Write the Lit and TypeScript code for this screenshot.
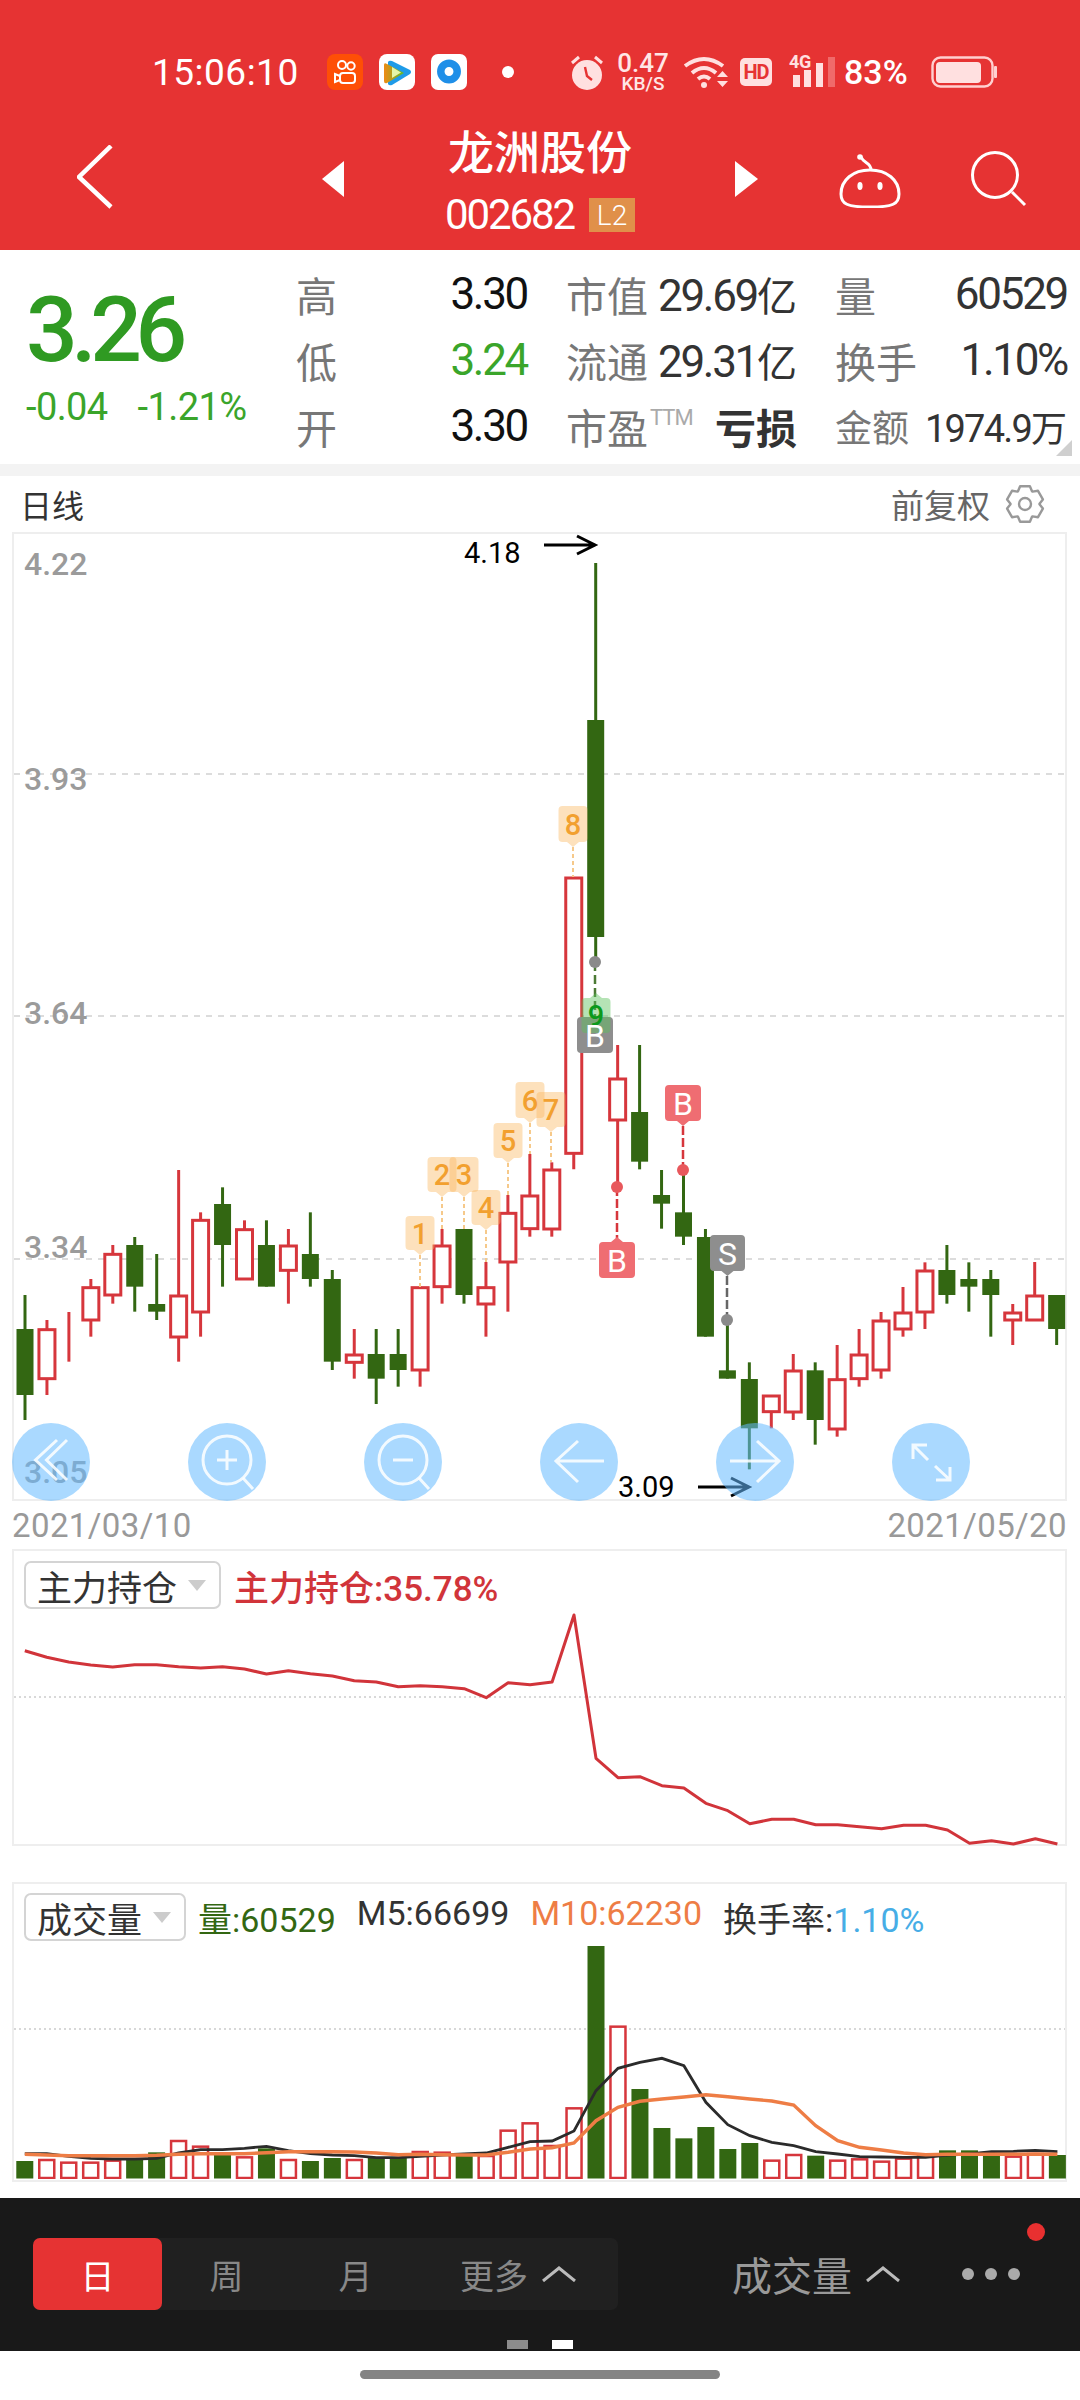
import { LitElement, html, css, svg } from "lit";
import { customElement } from "lit/decorators.js";

type C = [number, number, number, number, number, number];
const CANDLES: C[] = [
  [0, 585, 687, 885, 960, 0],[1, 660, 686, 836, 885, 0],[1, 636, 687, 687, 785, 0],[1, 537, 560, 660, 710, 0],
  [1, 435, 460, 585, 611, 0],[0, 411, 435, 560, 635, 0],[0, 462, 612, 635, 660, 0],[1, 210, 585, 711, 785, 0],
  [1, 337, 358, 636, 710, 0],[0, 262, 312, 435, 560, 0],[1, 361, 386, 537, 537, 0],[0, 361, 435, 560, 560, 0],
  [1, 387, 435, 511, 611, 0],[0, 337, 462, 537, 560, 0],[0, 510, 537, 785, 810, 0],[1, 687, 762, 787, 836, 0],
  [0, 687, 762, 836, 912, 0],[0, 687, 762, 810, 860, 0],[1, 560, 560, 810, 860, 0],[1, 387, 435, 560, 611, 0],
  [0, 387, 387, 585, 611, 0],[1, 486, 560, 612, 710, 0],[1, 285, 337, 486, 635, 0],[1, 162, 285, 386, 410, 0],
  [1, 187, 207, 387, 410, 0],[1, -669, -669, 160, 208, 0],[0, -1611, -1140, -489, -414, 0],[1, -165, -66, 60, 261, 0],
  [0, -165, 36, 185, 208, 0],[0, 210, 285, 311, 386, 0],[0, 210, 337, 410, 435, 0],[0, 387, 411, 710, 710, 0],
  [0, 660, 811, 836, 836, 0],[0, 787, 837, 985, 1108, 0],[1, 885, 885, 935, 985, 0],[1, 762, 810, 936, 960, 0],
  [0, 787, 811, 960, 1034, 0],[1, 735, 836, 987, 1010, 0],[1, 687, 762, 836, 860, 0],[1, 636, 660, 810, 836, 0],
  [1, 561, 636, 687, 710, 0],[1, 487, 510, 636, 687, 0],[0, 435, 510, 585, 611, 0],[0, 487, 537, 560, 635, 0],
  [0, 510, 537, 585, 710, 0],[1, 612, 636, 660, 735, 0],[1, 486, 585, 660, 660, 0],[0, 585, 585, 687, 735, 0],
];
const HOLD = [332,352,366,375,381,374,374,380,384,380,387,402,392,401,408,422,426,440,437,440,446,473,428,434,426,225,655,713,710,737,744,790,812,851,838,838,854,854,860,866,856,856,870,910,902,912,896,912];
const VOL: [number, number][] = [[0,906],[1,900],[1,908],[1,908],[1,902],[0,902],[0,880],[1,843],[1,860],[0,888],[1,892],[0,868],[1,900],[0,906],[0,897],[1,900],[0,897],[0,897],[1,876],[1,878],[0,890],[1,888],[1,812],[1,790],[1,858],[1,745],[0,261],[1,500],[0,690],[0,807],[0,838],[0,804],[0,870],[0,852],[1,902],[1,885],[0,890],[1,902],[1,898],[1,905],[1,896],[1,888],[0,874],[0,874],[0,884],[1,890],[1,882],[0,888]];
const M5 = [884,884,892,898,900,900,898,882,872,872,868,862,875,884,888,890,896,896,892,888,885,882,865,848,846,816,695,628,610,598,620,730,797,830,850,860,878,885,893,894,895,895,888,885,878,877,874,878];
const M10 = [886,888,890,890,890,890,889,886,884,884,884,881,878,878,878,879,882,887,886,887,888,888,880,870,866,852,785,745,727,720,714,707,713,720,726,738,800,845,865,873,882,887,886,886,886,886,885,886];

const X = (i: number) => 25 + 21.95 * i;
const Y = (z: number) => 1100 + z / 3;
const RED = "#d6363c";
const GREEN = "#336712";

function gearPath(cx: number, cy: number) {
  const pts: string[] = [];
  for (let k = 0; k < 6; k++) {
    const a = (k * Math.PI) / 3 - Math.PI / 2;
    const d = 0.27, e = 0.5;
    const p = (r: number, t: number) => `${(cx + r * Math.cos(t)).toFixed(1)} ${(cy + r * Math.sin(t)).toFixed(1)}`;
    pts.push(p(14.5, a - e), p(18.5, a - d), p(18.5, a + d), p(14.5, a + e));
  }
  return "M" + pts.join("L") + "Z";
}

function tag(cx: number, top: number, bottom: number, tipY: number, w: number, fill: string, op = 1) {
  const l = cx - w / 2, r = cx + w / 2;
  const up = tipY < top;
  const shape = up
    ? `M${l + 4} ${top}H${cx - 6}L${cx} ${tipY}L${cx + 6} ${top}H${r - 4}Q${r} ${top} ${r} ${top + 4}V${bottom - 4}Q${r} ${bottom} ${r - 4} ${bottom}H${l + 4}Q${l} ${bottom} ${l} ${bottom - 4}V${top + 4}Q${l} ${top} ${l + 4} ${top}Z`
    : `M${l + 4} ${top}H${r - 4}Q${r} ${top} ${r} ${top + 4}V${bottom - 4}Q${r} ${bottom} ${r - 4} ${bottom}H${cx + 6}L${cx} ${tipY}L${cx - 6} ${bottom}H${l + 4}Q${l} ${bottom} ${l} ${bottom - 4}V${top + 4}Q${l} ${top} ${l + 4} ${top}Z`;
  return svg`<path d=${shape} fill=${fill} opacity=${op}></path>`;
}

const ORANGE_TAGS: [number, number, number, number, number, string][] = [
  [420, 1216, 1250, 1255, 1287, "1"],
  [442, 1157, 1192, 1197, 1229, "2"],
  [464, 1157, 1192, 1197, 1229, "3"],
  [486, 1190, 1225, 1230, 1262, "4"],
  [508, 1123, 1158, 1163, 1195, "5"],
  [530, 1082, 1118, 1123, 1154, "6"],
  [551, 1092, 1127, 1132, 1162, "7"],
  [573, 806, 842, 847, 877, "8"],
];

function mainChart() {
  return svg`<svg class="plot" viewBox="12 532 1055 969" width="1055" height="969">
    ${[774, 1016, 1259].map((y) => svg`<line x1="14" x2="1065" y1=${y} y2=${y} stroke="#dcdcdc" stroke-width="2" stroke-dasharray="6 6"></line>`)}
    <text class="axis" x="24" y="575">4.22</text>
    <text class="axis" x="24" y="790">3.93</text>
    <text class="axis" x="24" y="1024">3.64</text>
    <text class="axis" x="24" y="1258">3.34</text>
    <text class="axis" x="24" y="1483">3.05</text>
    ${CANDLES.map((c, i) => {
      const x = X(i);
      const col = c[0] ? RED : GREEN;
      return svg`<line x1=${x} x2=${x} y1=${Y(c[1])} y2=${Y(c[4])} stroke=${col} stroke-width="3"></line>
      ${c[0]
        ? svg`<rect x=${x - 8} y=${Y(c[2]) + 1} width="16" height=${Math.max(Y(c[3]) - Y(c[2]) - 1, 0)} fill="#fff" stroke=${col} stroke-width="3"></rect>`
        : svg`<rect x=${x - 8.5} y=${Y(c[2])} width="17" height=${Y(c[3]) - Y(c[2])} fill=${col}></rect>`}`;
    })}
    ${ORANGE_TAGS.map((t) => svg`<line x1=${t[0]} x2=${t[0]} y1=${t[3]} y2=${t[4]} stroke="#f6c98a" stroke-width="2" stroke-dasharray="4 3"></line>`)}
    ${ORANGE_TAGS.map((t) => tag(t[0], t[1], t[2], t[3], 29, "#fbb860", 0.42))}
    ${ORANGE_TAGS.map((t) => svg`<text class="tag-t" x=${t[0]} y=${(t[1] + t[2]) / 2 + 10.5} fill="#f2a02f" text-anchor="middle">${t[5]}</text>`)}

    <line x1="595" x2="595" y1="962" y2="1017" stroke="#4b7a34" stroke-width="2.5" stroke-dasharray="9 4"></line>
    <circle cx="595" cy="962" r="6" fill="#8a8a8a"></circle>
    <rect x="577" y="1017" width="36" height="36" rx="4" fill="#8e8e8e"></rect>
    ${tag(596, 998, 1033, 993, 29, "#5cc05c", 0.45)}
    <text class="tag-t" x="596" y="1026" fill="#0b9a1c" text-anchor="middle">9</text>
    <text class="tag-b" x="595" y="1047" fill="#fff" text-anchor="middle">B</text>

    <line x1="617" x2="617" y1="1187" y2="1238" stroke=${RED} stroke-width="2.5" stroke-dasharray="9 3"></line>
    <circle cx="617" cy="1187" r="6" fill="#e8585c"></circle>
    ${tag(617, 1242, 1278, 1237, 36, "#ef6d72")}
    <text class="tag-b" x="617" y="1272" fill="#fff" text-anchor="middle">B</text>

    <line x1="683" x2="683" y1="1126" y2="1170" stroke=${RED} stroke-width="2.5" stroke-dasharray="9 3"></line>
    <circle cx="683" cy="1170" r="6" fill="#e8585c"></circle>
    ${tag(683, 1085, 1121, 1126, 36, "#ef6d72")}
    <text class="tag-b" x="683" y="1115" fill="#fff" text-anchor="middle">B</text>

    <line x1="727" x2="727" y1="1276" y2="1320" stroke="#666" stroke-width="2.5" stroke-dasharray="9 3"></line>
    <circle cx="727" cy="1320" r="6" fill="#8a8a8a"></circle>
    ${tag(727.5, 1235, 1271, 1276, 35, "#8e8e8e")}
    <text class="tag-b" x="727.5" y="1265" fill="#fff" text-anchor="middle">S</text>

    <text class="note" x="464" y="563">4.18</text>
    <path d="M544 545H594M577 536L595 545L577 554" fill="none" stroke="#000" stroke-width="3"></path>
    <text class="note" x="618" y="1497">3.09</text>
    <path d="M698 1487H748M731 1478L749 1487L731 1496" fill="none" stroke="#000" stroke-width="3"></path>
  </svg>`;
}

const px = (i: number) => (36 + 31.9 * i) / 1.452;

function holdChart() {
  const pts = HOLD.map((z, i) => `${px(i).toFixed(1)},${(1540 + z / 3).toFixed(1)}`).join(" ");
  return svg`<svg class="plot-flow" viewBox="12 1609 1055 237" width="1055" height="237">
    <line x1="14" x2="1065" y1="1697" y2="1697" stroke="#d8d8d8" stroke-width="2" stroke-dasharray="2 3"></line>
    <polyline points=${pts} fill="none" stroke="#d1343a" stroke-width="3" stroke-linejoin="round"></polyline>
  </svg>`;
}

function volChart() {
  const py = (z: number) => 1860 + z / 3;
  const line = (a: number[]) => a.map((z, i) => `${px(i).toFixed(1)},${py(z).toFixed(1)}`).join(" ");
  return svg`<svg class="plot-flow" viewBox="12 1942 1055 238" width="1055" height="238">
    <line x1="14" x2="1065" y1="2030" y2="2030" stroke="#d8d8d8" stroke-width="2" stroke-dasharray="2 3"></line>
    ${VOL.map(([t, z], i) => {
      const x = px(i);
      return t
        ? svg`<rect x=${x - 7.5} y=${py(z) + 1} width="15" height=${2178 - py(z)} fill="#fff" stroke=${RED} stroke-width="2.5"></rect>`
        : svg`<rect x=${x - 8.5} y=${py(z)} width="17" height=${2179.5 - py(z)} fill=${GREEN}></rect>`;
    })}
    <polyline points=${line(M5)} fill="none" stroke="#2b2b2b" stroke-width="2.8"></polyline>
    <polyline points=${line(M10)} fill="none" stroke="#ee7d45" stroke-width="3.4"></polyline>
  </svg>`;
}

const ROUND_ICONS = [
  svg`<path d="M45 17L23.5 37L45 57M55 17L34.5 37L55 57"></path>`,
  svg`<circle cx="39" cy="37" r="24"></circle><path d="M55 55L65 66M29 37H49M39 27V47"></path>`,
  svg`<circle cx="39" cy="37" r="24"></circle><path d="M55 55L65 66M29 37H49"></path>`,
  svg`<path d="M64 38H17M38 18L16 38L38 59"></path>`,
  svg`<path d="M14 38H62M41 18L63 38L41 59"></path>`,
  svg`<path d="M21 22L36 37M21 36V22H35M43 43L58 57M58 44V57H44"></path>`,
];

@customElement("app-root")
export class AppRoot extends LitElement {
  static styles = css`
    :host { display: block; width: 1080px; height: 2400px; background: #fff; overflow: hidden;
      font-family: Roboto, "Noto Sans CJK SC", sans-serif; color: #333; }
    .header { height: 250px; background: #e63333; color: #fff; box-sizing: border-box; padding-top: 52px; }
    .status { display: flex; align-items: center; height: 40px; padding-left: 152px; }
    .time { width: 146px; font-size: 37px; letter-spacing: .5px; white-space: nowrap; }
    .app { width: 36px; height: 36px; display: block; margin-left: 16px; }
    .app.first { margin-left: 29px; }
    .sdot { width: 12px; height: 12px; border-radius: 50%; background: #fff; margin-left: 35px; }
    .alarm { margin-left: 56px; display: block; }
    .net { margin-left: 13px; width: 52px; display: flex; flex-direction: column; align-items: center; color: #ffe6e6; white-space: nowrap; }
    .net b { font-size: 26px; line-height: 20px; font-weight: 500; }
    .net i { font-style: normal; font-size: 19px; line-height: 16px; font-weight: 500; margin-top: 3px; }
    .wifi { margin-left: 14px; display: block; }
    .hd { margin-left: 11px; width: 32px; height: 28px; border-radius: 5px; background: #ffe0e0; color: #e63333;
      font-size: 20px; font-weight: 700; display: flex; align-items: center; justify-content: center; letter-spacing: -1px; }
    .signal { margin-left: 17px; position: relative; width: 46px; height: 32px; }
    .signal span { position: absolute; left: 0; top: -2px; font-size: 18px; line-height: 16px; font-weight: 700; color: #ffe0e0; letter-spacing: -.3px; }
    .signal svg { display: block; }
    .pct { margin-left: 9px; width: 64px; font-size: 34px; font-weight: 500; white-space: nowrap; color: #fff; }
    .batt { margin-left: 23px; display: block; }

    .nav { display: flex; align-items: flex-start; margin-top: 36px; padding-left: 77px; }
    .nav svg { display: block; flex: none; }
    .back { margin-top: 17px; }
    .prev { margin: 33px 0 0 209px; }
    .next { margin: 33px 0 0 45px; }
    .robot { margin: 24px 0 0 80px; }
    .search { margin: 23px 0 0 68px; }
    .titlebox { margin-left: 46px; width: 300px; display: flex; flex-direction: column; align-items: center; }
    .name { font-size: 46px; line-height: 50px; font-weight: 500; white-space: nowrap; }
    .coderow { display: flex; align-items: center; gap: 15px; margin-top: 20px; height: 34px; }
    .code { font-size: 42px; line-height: 34px; letter-spacing: -2.1px; }
    .l2 { width: 46px; height: 34px; background: #e0904a; font-size: 28px; font-weight: 300; display: flex; align-items: center; justify-content: center; }

    .quote { position: relative; height: 214px; box-sizing: border-box; padding-top: 11px; display: grid;
      grid-template-columns: 296px 231px 270px 270px; grid-auto-rows: 66px; white-space: nowrap; }
    .last { grid-row: 1 / span 3; padding-left: 26px; }
    .big { font-size: 91px; line-height: 90px; font-weight: 500; letter-spacing: -6.4px; color: #2f9a22; margin-top: 24px; }
    .chg { display: flex; gap: 30px; font-size: 38px; line-height: 44px; letter-spacing: -.6px; color: #3aa52a; margin-top: 10px; }
    .cell { display: flex; align-items: center; justify-content: space-between; font-size: 44px; color: #333; letter-spacing: -2.3px; }
    .cell.c3 { padding-left: 39px; }
    .cell.c4 { padding-left: 38px; }
    .cj { font-size: 40px; letter-spacing: 0; }
    .lab { color: #777; letter-spacing: 0; font-size: 41px; display: flex; }
    .lab sup { font-size: 22px; line-height: 20px; color: #aaa; margin: 12px 0 0 2px; letter-spacing: -1px; }
    .cell.ink { color: #111; }
    .cell.dn { color: #3aa52a; }
    .loss .val { font-weight: 700; letter-spacing: 0; font-size: 41px; }
    .sm { font-size: 38px; letter-spacing: -1.8px; }
    .sm .lab { font-size: 37px; }
    .sm .cj { font-size: 36px; }
    .corner { position: absolute; right: 8px; bottom: 8px; width: 0; height: 0;
      border-style: solid; border-width: 0 0 16px 16px; border-color: transparent transparent #cfcfcf transparent; }
    .gap { height: 12px; background: #f3f3f3; }

    .chead { height: 56px; display: flex; align-items: center; justify-content: space-between; padding: 0 35px 0 20px; box-sizing: border-box; font-size: 32px; }
    .right { display: flex; align-items: center; gap: 15px; color: #666; font-size: 33px; }
    .right svg { display: block; }
    .chart { position: relative; width: 1055px; height: 969px; margin-left: 12px; box-shadow: inset 0 0 0 2px #eee; }
    .plot { position: absolute; left: 0; top: 0; overflow: visible; }
    .axis { font-size: 32px; font-weight: 500; fill: #9b9b9b; }
    .note { font-size: 29px; fill: #000; }
    .tag-t { font-size: 29px; font-weight: 500; }
    .tag-b { font-size: 32px; }
    .rounds { position: absolute; left: 0; bottom: 0; display: flex; gap: 98px; }
    .rb { width: 78px; height: 78px; border-radius: 50%; background: rgba(100, 185, 255, .55); display: block; }
    .rb g { fill: none; stroke: #fff; stroke-opacity: .85; stroke-width: 3; }
    .dates { height: 48px; display: flex; align-items: center; justify-content: space-between; padding: 0 13px 0 12px;
      font-size: 33px; color: #999; letter-spacing: .4px; }
    .panel { width: 1055px; margin-left: 12px; box-shadow: inset 0 0 0 2px #eee; box-sizing: border-box; }
    .p2 { height: 297px; padding-top: 12px; }
    .p3 { height: 300px; margin-top: 36px; padding-top: 11px; }
    .phead { display: flex; align-items: center; height: 48px; padding-left: 12px; font-size: 35px; white-space: nowrap; }
    .sel { display: flex; align-items: center; height: 48px; box-sizing: border-box; border: 2px solid #d4d4d4; border-radius: 7px; padding-left: 11px; color: #333; }
    .sel svg { display: block; margin: 0 13px 0 11px; }
    .legend { margin-left: 13px; color: #d1343a; font-weight: 500; }
    .leg { display: flex; font-size: 34px; margin-left: 12px; }
    .leg span { margin-right: 21px; }
    .leg .g { color: #336712; }
    .leg .k { color: #333; }
    .leg .o { color: #ee7d45; }
    .leg .b { margin: 0; color: #47ade6; }
    .plot-flow { display: block; }

    .foot { position: relative; margin-top: 16px; height: 153px; background: #191919; box-sizing: border-box; padding-top: 40px; color: #888; }
    .frow { display: flex; align-items: center; height: 72px; padding-left: 33px; }
    .seg { display: flex; width: 585px; height: 72px; background: #202020; border-radius: 7px; font-size: 34px; }
    .seg div { width: 129px; display: flex; align-items: center; justify-content: center; }
    .seg .on { background: #e63333; color: #fff; border-radius: 7px; }
    .seg .more { width: 198px; justify-content: flex-start; padding-left: 40px; box-sizing: border-box; gap: 14px; }
    .vol { margin-left: 114px; font-size: 40px; color: #999; display: flex; align-items: center; gap: 14px; white-space: nowrap; }
    .fdots { margin-left: 62px; display: flex; gap: 11px; }
    .fdots i { width: 12px; height: 12px; border-radius: 50%; background: #aaa; }
    .rdot { position: absolute; left: 1027px; top: 25px; width: 18px; height: 18px; border-radius: 50%; background: #e83030; }
    .pager { display: flex; gap: 24px; margin: 30px 0 0 507px; }
    .pager i { width: 21px; height: 9px; background: #8c8c8c; }
    .pager i.on { background: #fff; }
    .home { height: 49px; display: flex; justify-content: center; padding-top: 19px; box-sizing: border-box; }
    .home i { width: 360px; height: 9px; border-radius: 5px; background: #848484; }
    svg text { font-family: Roboto, "Noto Sans CJK SC", sans-serif; }
  `;

  render() {
    return html`
      <div class="header">
        <div class="status">
          <div class="time">15:06:10</div>
          <svg class="app first" viewBox="0 0 36 36"><rect width="36" height="36" rx="8" fill="#fe4f06"></rect>
            <g fill="none" stroke="#fff" stroke-width="2"><circle cx="15" cy="11" r="4"></circle><circle cx="24" cy="12" r="3.7"></circle><rect x="13" y="19" width="15" height="10" rx="3"></rect><path d="M13 22L8 20V28L13 26"></path></g></svg>
          <svg class="app" viewBox="0 0 36 36"><defs><linearGradient id="tv" x1="0" x2="1" y1="0" y2="0"><stop offset="0" stop-color="#f08a14"></stop><stop offset="1" stop-color="#5dbb2a"></stop></linearGradient></defs>
            <rect width="36" height="36" rx="8" fill="#fff"></rect>
            <path d="M9 8Q10 6 13 7L31 16Q33 18 31 20L13 31Q10 32 9 30Z" fill="#1e9be8"></path>
            <path d="M5 11Q5 8 8 10L25 19L8 29Q5 30 5 27Z" fill="url(#tv)"></path>
            <path d="M13 13L22 18.5L13 24Z" fill="#e5f5a8"></path></svg>
          <svg class="app" viewBox="0 0 36 36"><rect width="36" height="36" rx="7" fill="#fff"></rect>
            <circle cx="18" cy="17.5" r="8.2" fill="none" stroke="#1f8fe8" stroke-width="7.5"></circle></svg>
          <div class="sdot"></div>
          <svg class="alarm" width="34" height="36" viewBox="0 0 34 36"><circle cx="17" cy="21" r="15" fill="#ffe0e0"></circle>
            <path d="M2 9L9 3M32 9L25 3" stroke="#ffe0e0" stroke-width="3" fill="none"></path>
            <path d="M15 13L17 22L22 26" stroke="#e63333" stroke-width="2.4" fill="none"></path></svg>
          <div class="net"><b>0.47</b><i>KB/S</i></div>
          <svg class="wifi" width="46" height="32" viewBox="0 0 46 32"><g fill="none" stroke="#ffe0e0" stroke-width="4"><path d="M2 10Q21 -4 40 10"></path><path d="M9 17Q21 7 33 17"></path><path d="M15 23Q21 18 27 23"></path></g>
            <circle cx="21" cy="29" r="3" fill="#ffe0e0"></circle><path d="M34 21H45L39.5 15ZM34 25H45L39.5 31Z" fill="#ffe0e0"></path></svg>
          <div class="hd">HD</div>
          <div class="signal"><span>4G</span>
            <svg width="46" height="32" viewBox="0 0 46 32"><rect x="4" y="19" width="7" height="12" fill="#ffe0e0"></rect><rect x="15" y="14" width="7" height="17" fill="#ffe0e0"></rect><rect x="27" y="7" width="7" height="24" fill="#ffe0e0"></rect><rect x="39" y="1" width="7" height="30" fill="#f06a6a"></rect></svg></div>
          <div class="pct">83%</div>
          <svg class="batt" width="66" height="32" viewBox="0 0 66 32"><rect x="1.5" y="1.5" width="60" height="29" rx="8" fill="none" stroke="#ffd0d0" stroke-width="2.4"></rect><rect x="5" y="6" width="45" height="21" rx="4" fill="#ffe0e0"></rect><rect x="63" y="10" width="3" height="12" rx="1" fill="#ffd0d0"></rect></svg>
        </div>
        <div class="nav">
          <svg class="back" width="36" height="64" viewBox="0 0 36 64"><path d="M34 1L2 32L34 62" fill="none" stroke="#fff" stroke-width="4.5"></path></svg>
          <svg class="prev" width="22" height="36" viewBox="0 0 22 36"><path d="M22 0V36L0 18Z" fill="#fff"></path></svg>
          <div class="titlebox">
            <div class="name">龙洲股份</div>
            <div class="coderow"><div class="code">002682</div><div class="l2">L2</div></div>
          </div>
          <svg class="next" width="23" height="36" viewBox="0 0 23 36"><path d="M0 0V36L23 18Z" fill="#fff"></path></svg>
          <svg class="robot" width="64" height="56" viewBox="0 0 64 56"><g fill="none" stroke="#fff" stroke-width="3"><path d="M3 42C3 28 15 18 32 18C49 18 61 28 61 42C61 52 55 55 32 55C9 55 3 52 3 42Z"></path><path d="M33 18C33 10 26 12 23 5"></path></g>
            <circle cx="22" cy="5" r="2.8" fill="#fff"></circle><ellipse cx="22" cy="34" rx="2.6" ry="4" fill="#fff"></ellipse><ellipse cx="42" cy="34" rx="2.6" ry="4" fill="#fff"></ellipse></svg>
          <svg class="search" width="58" height="56" viewBox="0 0 58 56"><g fill="none" stroke="#fff" stroke-width="3"><circle cx="25" cy="24" r="22.5"></circle><path d="M42 41L55 54"></path></g></svg>
        </div>
      </div>

      <div class="quote">
        <div class="last">
          <div class="big">3.26</div>
          <div class="chg"><span>-0.04</span><span>-1.21%</span></div>
        </div>
        <div class="cell ink"><span class="lab">高</span><span>3.30</span></div>
        <div class="cell c3"><span class="lab">市值</span><span>29.69<span class="cj">亿</span></span></div>
        <div class="cell c4"><span class="lab">量</span><span>60529</span></div>
        <div class="cell dn"><span class="lab">低</span><span>3.24</span></div>
        <div class="cell c3"><span class="lab">流通</span><span>29.31<span class="cj">亿</span></span></div>
        <div class="cell c4"><span class="lab">换手</span><span>1.10%</span></div>
        <div class="cell ink"><span class="lab">开</span><span>3.30</span></div>
        <div class="cell c3 loss"><span class="lab">市盈<sup>TTM</sup></span><span class="val">亏损</span></div>
        <div class="cell c4 sm"><span class="lab">金额</span><span>1974.9<span class="cj">万</span></span></div>
        <div class="corner"></div>
      </div>
      <div class="gap"></div>

      <div class="chead">
        <span>日线</span>
        <div class="right"><span>前复权</span>
          <svg width="40" height="40" viewBox="0 0 40 40"><path d=${gearPath(20, 20)} fill="none" stroke="#999" stroke-width="2.4" stroke-linejoin="round"></path><circle cx="20" cy="20" r="6" fill="none" stroke="#999" stroke-width="2.4"></circle></svg>
        </div>
      </div>
      <div class="chart">
        ${mainChart()}
        <div class="rounds">
          ${ROUND_ICONS.map((g) => html`<svg class="rb" viewBox="0 0 78 78"><g>${g}</g></svg>`)}
        </div>
      </div>
      <div class="dates"><span>2021/03/10</span><span>2021/05/20</span></div>

      <div class="panel p2">
        <div class="phead">
          <div class="sel">主力持仓<svg width="18" height="11" viewBox="0 0 18 11"><path d="M0 0H18L9 11Z" fill="#ccc"></path></svg></div>
          <div class="legend">主力持仓:35.78%</div>
        </div>
        ${holdChart()}
      </div>
      <div class="panel p3">
        <div class="phead">
          <div class="sel">成交量<svg width="18" height="11" viewBox="0 0 18 11"><path d="M0 0H18L9 11Z" fill="#ccc"></path></svg></div>
          <div class="leg"><span class="g">量:60529</span><span class="k">M5:66699</span><span class="o">M10:62230</span><span class="k">换手率:<span class="b">1.10%</span></span></div>
        </div>
        ${volChart()}
      </div>

      <div class="foot">
        <div class="frow">
          <div class="seg">
            <div class="on">日</div><div>周</div><div>月</div>
            <div class="more">更多<svg width="34" height="16" viewBox="0 0 34 16"><path d="M1 15L17 2L33 15" fill="none" stroke="#bbb" stroke-width="3"></path></svg></div>
          </div>
          <div class="vol">成交量<svg width="34" height="16" viewBox="0 0 34 16"><path d="M1 15L17 2L33 15" fill="none" stroke="#bbb" stroke-width="3"></path></svg></div>
          <div class="fdots"><i></i><i></i><i></i></div>
        </div>
        <div class="rdot"></div>
        <div class="pager"><i></i><i class="on"></i></div>
      </div>
      <div class="home"><i></i></div>
    `;
  }
}
